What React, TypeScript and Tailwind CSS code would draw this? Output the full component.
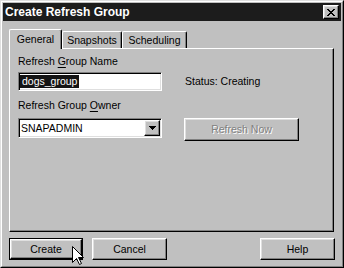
export default function App() {
  const raised =
    "border border-t-white border-l-white border-r-black border-b-black shadow-[inset_-1px_-1px_0_#808080,inset_1px_1px_0_#dfdfdf]";
  const sunken =
    "border border-t-[#808080] border-l-[#808080] border-r-white border-b-white shadow-[inset_1px_1px_0_#000,inset_-1px_-1px_0_#dfdfdf]";
  return (
    <div className="relative w-[344px] h-[268px] bg-[#c0c0c0] font-['Liberation_Sans',Arial,sans-serif] text-[10.5px] leading-[13px] text-black border border-t-[#dfdfdf] border-l-[#dfdfdf] border-r-black border-b-black select-none">
      <div className="h-full border border-t-white border-l-white border-r-[#808080] border-b-[#808080] p-[1px] flex flex-col">
        {/* Title bar */}
        <div className="h-[18px] shrink-0 bg-[#1c1c1c] flex items-center pl-[2px] pr-[2px]">
          <span className="text-white font-bold text-[12px] leading-[14px]">Create Refresh Group</span>
          <div className={`ml-auto w-[16px] h-[14px] bg-[#c0c0c0] ${raised} flex items-center justify-center`}>
            <svg width="8" height="7" viewBox="0 0 8 7" shapeRendering="crispEdges">
              <path
                d="M0 0h2v1H0z M6 0h2v1H6z M1 1h2v1H1z M5 1h2v1H5z M2 2h4v1H2z M3 3h2v1H3z M2 4h4v1H2z M1 5h2v1H1z M5 5h2v1H5z M0 6h2v1H0z M6 6h2v1H6z"
                fill="#000"
              />
            </svg>
          </div>
        </div>

        {/* Tabs + panel */}
        <div className="pl-[6px] pr-[7px]">
          <div className="mt-[8px] h-[19px] flex items-end">
            <div className="relative z-10 -mb-px h-[20px] w-[53px] bg-[#c0c0c0] border-t border-l border-r border-t-white border-l-white border-r-black shadow-[inset_-1px_0_0_#808080] rounded-t-[2px] flex items-center justify-center">
              General
            </div>
            <div className="h-[17px] w-[60px] bg-[#c0c0c0] border-t border-l border-r border-t-white border-l-white border-r-black shadow-[inset_-1px_0_0_#808080] rounded-t-[2px] flex items-center justify-center">
              Snapshots
            </div>
            <div className="h-[17px] w-[65px] bg-[#c0c0c0] border-t border-l border-r border-t-white border-l-white border-r-black shadow-[inset_-1px_0_0_#808080] rounded-t-[2px] flex items-center justify-center">
              Scheduling
            </div>
          </div>

          <div className="h-[184px] bg-[#c0c0c0] border border-t-white border-l-white border-r-black border-b-black shadow-[inset_-1px_-1px_0_#808080] pt-[6px] pl-[8px]">
            <div>
              Refresh <span className="underline underline-offset-[2px]">G</span>roup Name
            </div>
            <div className="mt-[4px] flex items-center">
              <div className={`w-[144px] h-[19px] bg-white ${sunken} p-[1px] flex items-center`}>
                <span className="bg-[#141414] text-white px-[2px] leading-[13px]">dogs_group</span>
              </div>
              <span className="ml-[23px]">Status: Creating</span>
            </div>
            <div className="mt-[8px]">
              Refresh Group <span className="underline underline-offset-[2px]">O</span>wner
            </div>
            <div className="mt-[6px] flex items-start">
              <div className={`w-[144px] h-[20px] bg-white ${sunken} p-[1px] flex items-stretch`}>
                <span className="ml-[1px] self-center">SNAPADMIN</span>
                <div className={`ml-auto w-[16px] bg-[#c0c0c0] ${raised} flex items-center justify-center`}>
                  <svg width="7" height="4" viewBox="0 0 7 4" shapeRendering="crispEdges">
                    <path d="M0 0h7v1H0z M1 1h5v1H1z M2 2h3v1H2z M3 3h1v1H3z" fill="#000" />
                  </svg>
                </div>
              </div>
              <div className={`ml-[22px] w-[115px] h-[23px] ${raised} flex items-center justify-center text-[#808080] [text-shadow:1px_1px_0_#fff]`}>
                Refresh Now
              </div>
            </div>
          </div>
        </div>

        {/* Bottom buttons */}
        <div className="mt-[6px] pl-[6px] pr-[6px] flex">
          <div className="w-[74px] h-[22px] border border-black">
            <div className={`h-full ${raised} flex items-center justify-center`}>Create</div>
          </div>
          <div className={`ml-[9px] w-[75px] h-[22px] ${raised} flex items-center justify-center`}>Cancel</div>
          <div className={`ml-auto w-[75px] h-[22px] ${raised} flex items-center justify-center`}>Help</div>
        </div>
      </div>

      {/* Mouse cursor */}
      <svg
        className="absolute left-[71px] top-[245px]"
        width="12"
        height="19"
        viewBox="0 0 12 19"
      >
        <path
          d="M0.5 0.5 L0.5 16.5 L4.5 12.5 L7.5 18.5 L9.5 17.5 L6.5 11.5 L11.5 11.5 Z"
          fill="#fff"
          stroke="#000"
          strokeWidth="1"
          strokeLinejoin="miter"
        />
      </svg>
    </div>
  );
}
